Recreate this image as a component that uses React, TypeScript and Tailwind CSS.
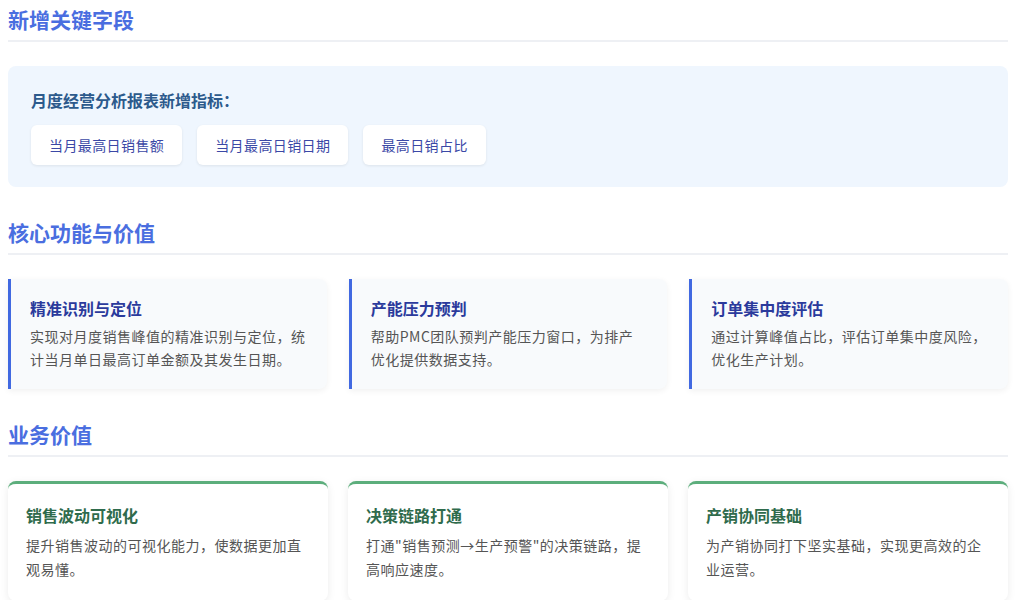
const FONT = { fontFamily: '"Noto Sans CJK SC", "Noto Sans", sans-serif' };

function SectionTitle({ children }: { children: React.ReactNode }) {
  return (
    <div className="mb-6 border-b-2 border-[#eef0f4] pb-[6px]">
      <h2 className="text-[21px] font-bold leading-[30px] text-[#4a6ee0]">{children}</h2>
    </div>
  );
}

const features = [
  { title: "精准识别与定位", body: "实现对月度销售峰值的精准识别与定位，统计当月单日最高订单金额及其发生日期。" },
  { title: "产能压力预判", body: "帮助PMC团队预判产能压力窗口，为排产优化提供数据支持。" },
  { title: "订单集中度评估", body: "通过计算峰值占比，评估订单集中度风险，优化生产计划。" },
];

const values = [
  { title: "销售波动可视化", body: "提升销售波动的可视化能力，使数据更加直观易懂。" },
  { title: "决策链路打通", body: "打通\"销售预测→生产预警\"的决策链路，提高响应速度。" },
  { title: "产销协同基础", body: "为产销协同打下坚实基础，实现更高效的企业运营。" },
];

export default function App() {
  return (
    <div className="bg-white pl-2 pr-4 pt-[4px]" style={FONT}>
      <SectionTitle>新增关键字段</SectionTitle>
      <div className="mb-[30px] rounded-lg bg-[#eff6fe] px-[23px] pb-[22px] pt-[21px]">
        <h3 className="mb-3 text-[16px] font-bold leading-[26px] text-[#2c5a8c]">月度经营分析报表新增指标：</h3>
        <div className="flex gap-[15px]">
          {["当月最高日销售额", "当月最高日销日期", "最高日销占比"].map((t) => (
            <div key={t} className="flex h-10 items-center rounded-md bg-white px-[18px] text-[14px] tracking-[0.4px] text-[#3b48a6] shadow-[0_1px_3px_rgba(0,0,0,0.08)]">
              {t}
            </div>
          ))}
        </div>
      </div>

      <SectionTitle>核心功能与价值</SectionTitle>
      <div className="mb-[30px] grid grid-cols-3 gap-[22px]">
        {features.map((f) => (
          <div key={f.title} className="h-[110px] rounded-r-lg border-l-[3px] border-[#4169e1] bg-[#f8fafc] pl-[19px] pr-5 pt-[17px] shadow-[0_2px_6px_rgba(0,0,0,0.06)]">
            <h4 className="mb-[5px] text-[16px] font-bold leading-[24px] text-[#2b3a9c]">{f.title}</h4>
            <p className="text-[14px] leading-[23px] tracking-[0.5px] text-[#555]">{f.body}</p>
          </div>
        ))}
      </div>

      <SectionTitle>业务价值</SectionTitle>
      <div className="grid grid-cols-3 gap-[20px]">
        {values.map((v) => (
          <div key={v.title} className="h-[120px] rounded-lg border-t-[3px] border-[#5cae7c] bg-white pl-[18px] pr-5 pt-[19px] shadow-[0_2px_8px_rgba(0,0,0,0.08)]">
            <h4 className="mb-[6px] text-[16px] font-bold leading-[24px] text-[#2f6b4c]">{v.title}</h4>
            <p className="text-[14px] leading-[24px] tracking-[0.5px] text-[#555]">{v.body}</p>
          </div>
        ))}
      </div>
    </div>
  );
}
